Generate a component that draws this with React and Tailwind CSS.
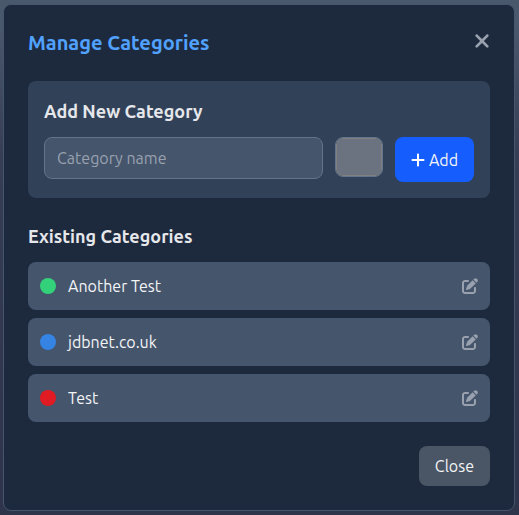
import { useState } from "react";
import { FaPenToSquare, FaPlus, FaXmark } from "react-icons/fa6";

const initialCategories = [
  { id: 1, name: "Another Test", color: "#33d17a" },
  { id: 2, name: "jdbnet.co.uk", color: "#3584e4" },
  { id: 3, name: "Test", color: "#e01b24" },
];

function CategoryRow({ category }) {
  return (
    <li className="flex h-12 items-center justify-between rounded-lg bg-slate-600 px-3">
      <div className="flex items-center gap-3">
        <span
          className="h-4 w-4 rounded-full"
          style={{ backgroundColor: category.color }}
        />
        <span className="text-gray-100">{category.name}</span>
      </div>
      <button
        type="button"
        aria-label={`Edit ${category.name}`}
        className="text-gray-400 hover:text-blue-400"
      >
        <FaPenToSquare className="h-4 w-4" />
      </button>
    </li>
  );
}

export default function App() {
  const [categories, setCategories] = useState(initialCategories);
  const [name, setName] = useState("");
  const [color, setColor] = useState("#6b7280");

  const handleAdd = (e) => {
    e.preventDefault();
    if (!name.trim()) return;

    setCategories([...categories, { id: Date.now(), name: name.trim(), color }]);
    setName("");
  };

  return (
    <div className="flex min-h-screen items-center justify-center bg-linear-to-b from-[#4a586c] from-5% via-[#363e53] via-30% to-[#2e3449] py-1 pr-1 pl-[3px] font-['Ubuntu','Noto_Sans',sans-serif]">
      <div
        role="dialog"
        aria-labelledby="modal-title"
        className="w-full max-w-lg rounded-lg border border-slate-600 bg-slate-800 p-6"
      >
        <div className="mb-6 flex items-start justify-between">
          <h3 id="modal-title" className="text-xl font-semibold text-blue-400">
            Manage Categories
          </h3>
          <button
            type="button"
            aria-label="Close dialog"
            className="flex h-6 items-center text-gray-400 hover:text-gray-200"
          >
            <FaXmark className="h-6 w-4" />
          </button>
        </div>

        {/* Add form */}
        <div className="mb-6 rounded-lg bg-slate-700 p-4">
          <h4 className="mb-3 text-lg font-semibold text-gray-200">
            Add New Category
          </h4>
          <form onSubmit={handleAdd} className="flex items-start gap-3">
            <input
              type="text"
              aria-label="Category name"
              value={name}
              onChange={(e) => setName(e.target.value)}
              placeholder="Category name"
              className="h-[42px] min-w-0 flex-1 rounded-lg border border-slate-500 bg-slate-600 px-3 text-gray-100 placeholder:text-gray-400"
            />
            <input
              type="color"
              aria-label="Category color"
              value={color}
              onChange={(e) => setColor(e.target.value)}
              className="h-10 w-12 rounded-lg border border-slate-500 [&::-webkit-color-swatch]:rounded-md [&::-webkit-color-swatch]:border-[#808080] [&::-webkit-color-swatch-wrapper]:p-0"
            />
            <button
              type="submit"
              className="flex h-[45px] items-center gap-1 rounded-lg bg-blue-600 px-4 text-gray-100 hover:bg-blue-700"
            >
              <FaPlus className="h-4 w-3.5 text-white" />
              Add
            </button>
          </form>
        </div>

        {/* Category list */}
        <h4 className="mb-3 text-lg font-semibold text-gray-200">
          Existing Categories
        </h4>
        <ul className="space-y-2">
          {categories.map((category) => (
            <CategoryRow key={category.id} category={category} />
          ))}
        </ul>

        <div className="mt-6 flex justify-end">
          <button
            type="button"
            className="rounded-lg bg-gray-600 px-4 py-2 text-gray-100 hover:bg-gray-500"
          >
            Close
          </button>
        </div>
      </div>
    </div>
  );
}
